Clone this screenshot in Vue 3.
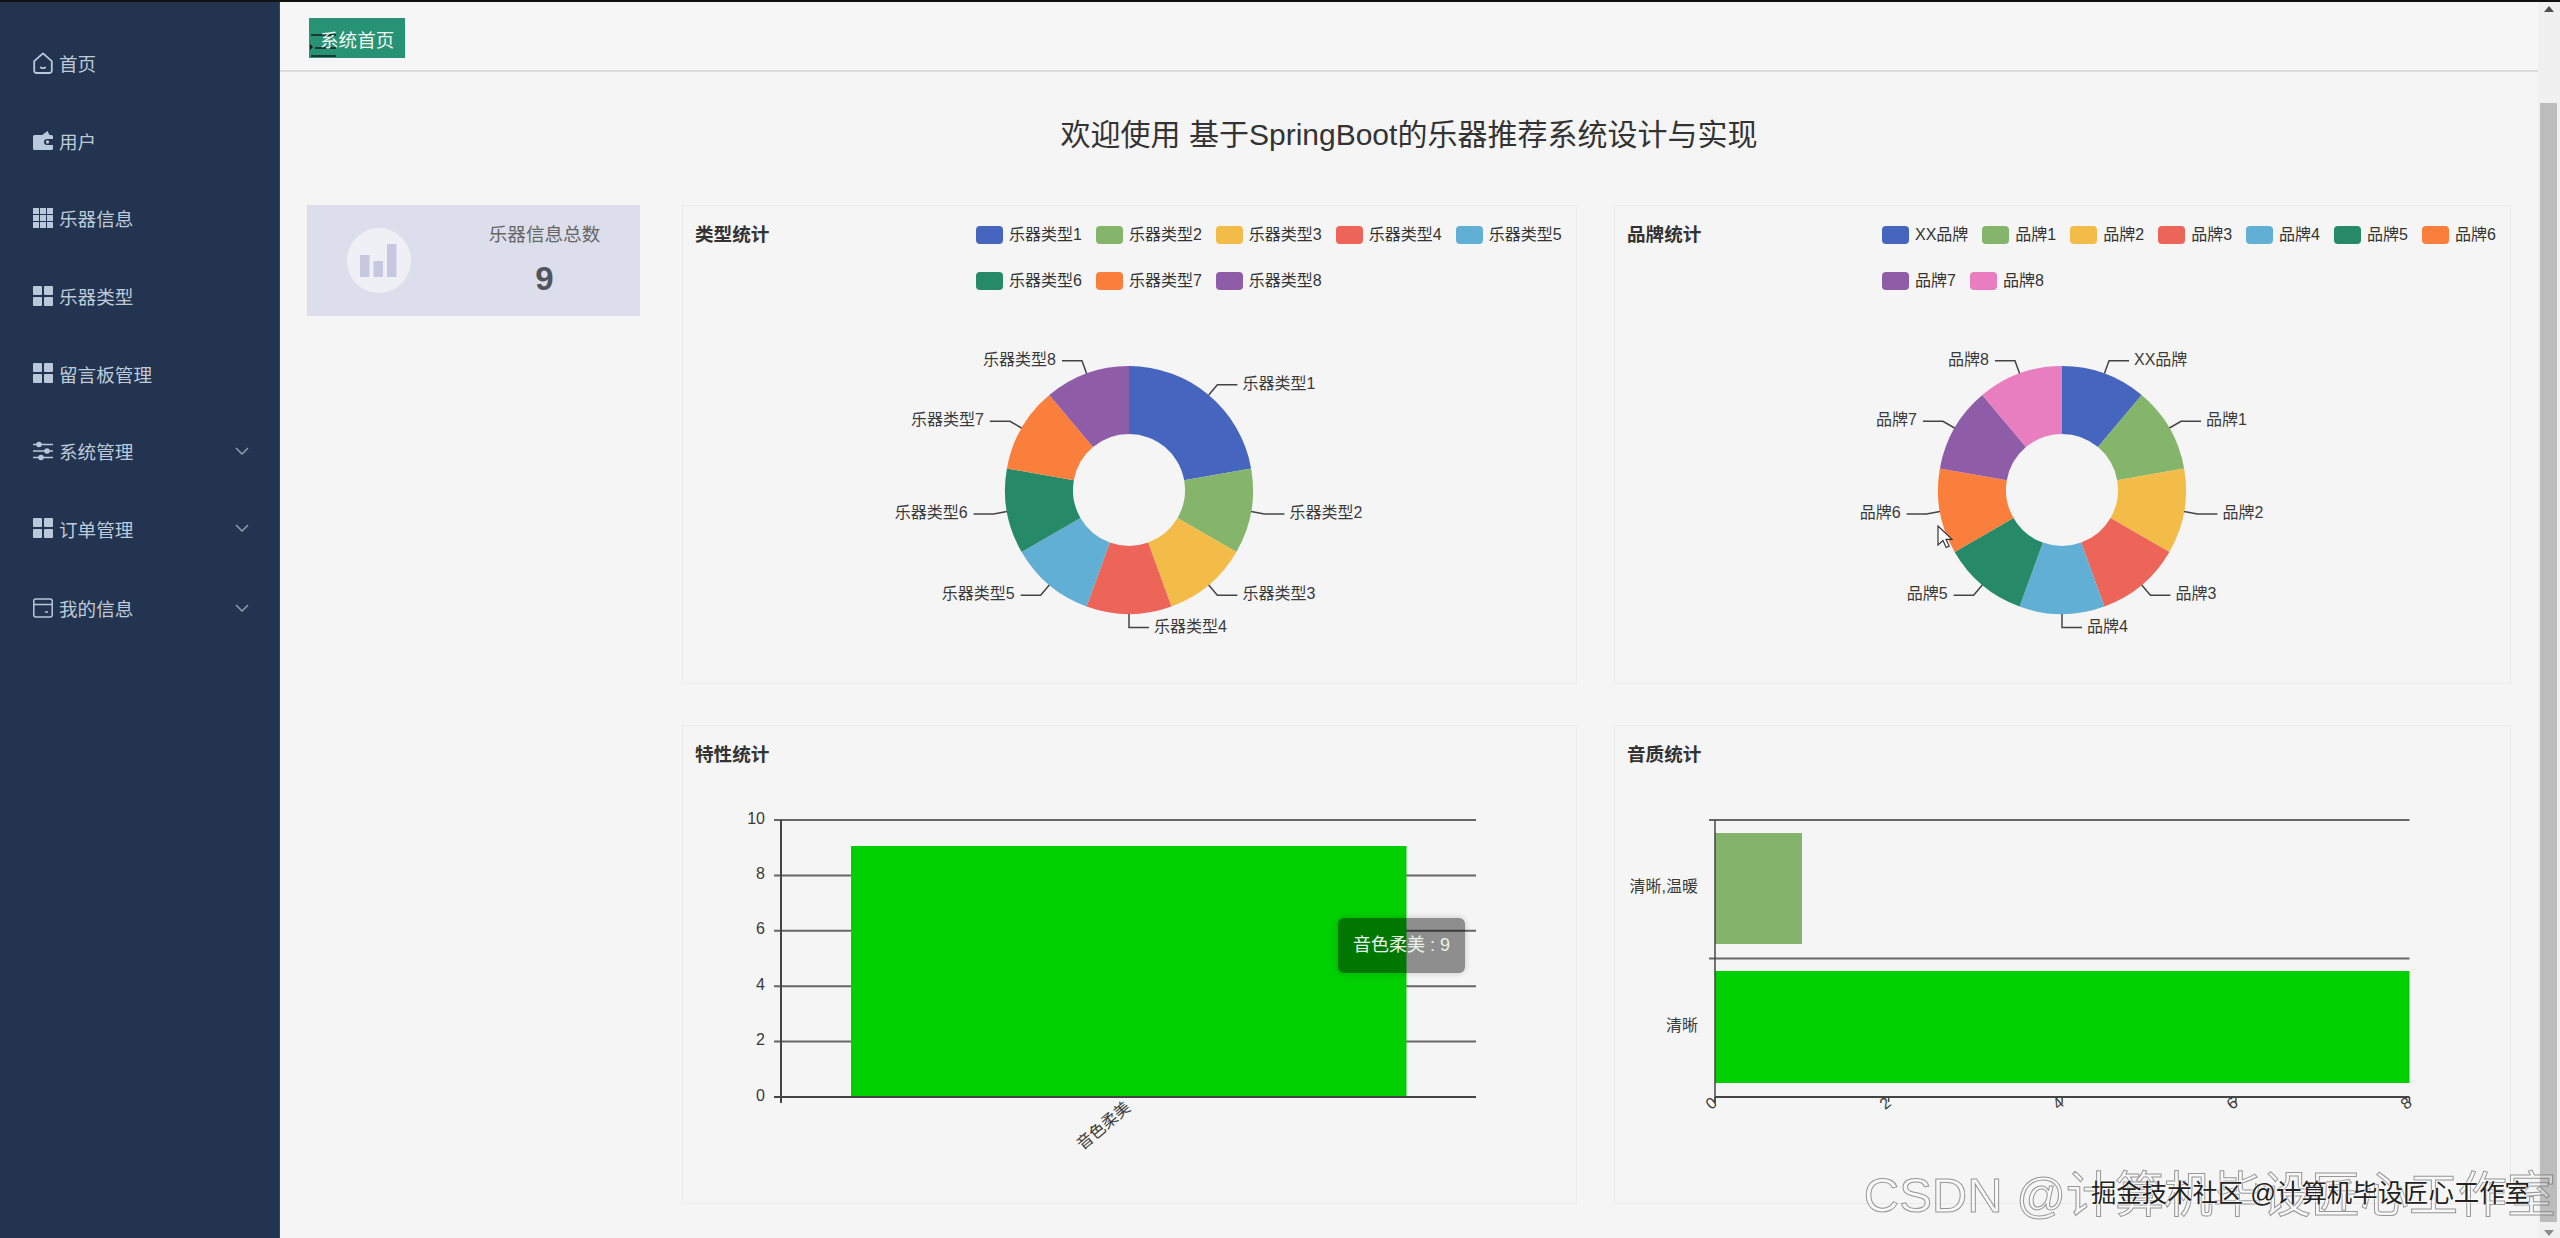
<script setup>
const menu = [
  { label: '首页', icon: 'home' },
  { label: '用户', icon: 'wallet' },
  { label: '乐器信息', icon: 'grid' },
  { label: '乐器类型', icon: 'squares' },
  { label: '留言板管理', icon: 'squares' },
  { label: '系统管理', icon: 'sliders', more: true },
  { label: '订单管理', icon: 'squares', more: true },
  { label: '我的信息', icon: 'card', more: true }
]

const colors = ['#4565be', '#84b56a', '#f3bb47', '#ec6558', '#61afd5', '#268a68', '#fb7f3c', '#8f5da8', '#e87dc0']

// donut maths, same shape echarts gives with radius [56, 124]
const CX = 446
const CY = 200
const R = 124
const R0 = 56

const polar = (r, deg) => {
  const a = (deg * Math.PI) / 180
  return [CX + r * Math.sin(a), CY - r * Math.cos(a)]
}

const buildPie = (names, values) => {
  const total = values.reduce((s, v) => s + v, 0)
  let start = 0
  return names.map((name, i) => {
    const sweep = (values[i] / total) * 360
    const end = start + sweep
    const mid = start + sweep / 2
    const [x1, y1] = polar(R, start)
    const [x2, y2] = polar(R, end)
    const [x3, y3] = polar(R0, end)
    const [x4, y4] = polar(R0, start)
    const large = sweep > 180 ? 1 : 0
    const [lx0, ly0] = polar(R, mid)
    const [lx1, ly1] = polar(R + 13.5, mid)
    const right = mid <= 180
    const lx2 = lx1 + (right ? 20 : -20)
    start = end
    return {
      name,
      color: colors[i],
      d: `M${x1} ${y1}A${R} ${R} 0 ${large} 1 ${x2} ${y2}L${x3} ${y3}A${R0} ${R0} 0 ${large} 0 ${x4} ${y4}Z`,
      line: `${lx0},${ly0} ${lx1},${ly1} ${lx2},${ly1}`,
      tx: lx2 + (right ? 5 : -6),
      ty: ly1 - 1.5,
      anchor: right ? 'start' : 'end'
    }
  })
}

const typeNames = Array.from({ length: 8 }, (_, i) => `乐器类型${i + 1}`)
const brandNames = ['XX品牌', ...Array.from({ length: 8 }, (_, i) => `品牌${i + 1}`)]

const pies = [
  { title: '类型统计', legendClass: 'legend-types', viewBox: '0 0 893 393', slices: buildPie(typeNames, [2, 1, 1, 1, 1, 1, 1, 1]) },
  { title: '品牌统计', legendClass: 'legend-brands', viewBox: '-1 0 895 393', slices: buildPie(brandNames, [1, 1, 1, 1, 1, 1, 1, 1, 1]) }
]

const yTicks = [
  { label: '10', y: 55 },
  { label: '8', y: 110.4 },
  { label: '6', y: 165.8 },
  { label: '4', y: 221.2 },
  { label: '2', y: 276.6 },
  { label: '0', y: 332 }
]

const xTicks = [
  { label: '0', tick: 99, x: 95 },
  { label: '2', tick: 272.6, x: 269 },
  { label: '4', tick: 446.2, x: 442 },
  { label: '6', tick: 619.9, x: 616 },
  { label: '8', tick: 793.5, x: 790 }
]
</script>

<template>
  <div class="page">
    <aside class="sidebar">
      <div v-for="item in menu" :key="item.label" class="menu-item">
        <svg v-if="item.icon === 'home'" class="menu-icon icon-tall" viewBox="0 0 20 22" fill="none" stroke="currentColor" stroke-width="1.8" stroke-linejoin="round">
          <path d="M1.2 9.2 10 1.4l8.8 7.8v9.4q0 2.4-2.4 2.4H3.6q-2.4 0-2.4-2.4z" />
          <path d="M7.8 15.4q2.2 1.5 4.4 0" stroke-linecap="round" />
        </svg>
        <svg v-else-if="item.icon === 'wallet'" class="menu-icon" viewBox="0 0 20 20" fill="currentColor">
          <path d="M0 6.5Q0 5 1.5 5h7.7L14.5 1l2 4h2Q20 5 20 6.5V9h-6a3 3 0 0 0 0 6h6v3.5q0 1.5-1.5 1.5h-17Q0 20 0 18.5z" />
          <circle cx="14.5" cy="12" r="1.7" />
        </svg>
        <svg v-else-if="item.icon === 'grid'" class="menu-icon" viewBox="0 0 20 20" fill="currentColor">
          <template v-for="row in 3" :key="row">
            <rect v-for="col in 3" :key="col" :x="(col - 1) * 7" :y="(row - 1) * 7" width="6" height="6" />
          </template>
        </svg>
        <svg v-else-if="item.icon === 'squares'" class="menu-icon" viewBox="0 0 20 20" fill="currentColor">
          <rect x="0" y="0" width="9" height="9" rx="1" />
          <rect x="11" y="0" width="9" height="9" rx="1" />
          <rect x="0" y="11" width="9" height="9" rx="1" />
          <rect x="11" y="11" width="9" height="9" rx="1" />
        </svg>
        <svg v-else-if="item.icon === 'sliders'" class="menu-icon" viewBox="0 0 20 20" fill="none" stroke="currentColor" stroke-width="1.6">
          <path d="M0 3.5h20M0 10h20M0 16.5h20" />
          <circle cx="6" cy="3.5" r="2" fill="currentColor" />
          <circle cx="14" cy="10" r="2" fill="currentColor" />
          <circle cx="8" cy="16.5" r="2" fill="currentColor" />
        </svg>
        <svg v-else class="menu-icon" viewBox="0 0 20 20" fill="none" stroke="currentColor" stroke-width="1.5">
          <rect x="0.8" y="1" width="18.4" height="18" rx="2" />
          <path d="M1 6.5h18M12 14h3" />
        </svg>
        <span class="menu-label">{{ item.label }}</span>
        <svg v-if="item.more" class="chevron" viewBox="0 0 14 8" fill="none" stroke="currentColor" stroke-width="1.5">
          <path d="M1 1l6 6 6-6" />
        </svg>
      </div>
    </aside>

    <div class="main">
      <header class="topbar">
        <div class="crumb">
          <svg class="hamburger" viewBox="0 0 26 24" fill="none" stroke="#1c1c1c" stroke-width="1.5">
            <path d="M1 1h25M5 14h21M1 22h25" />
            <path d="M0 10l3 3-3 3z" fill="#1c1c1c" stroke="none" />
          </svg>
          <span class="crumb-text">系统首页</span>
        </div>
      </header>

      <main class="content">
        <h1 class="welcome">欢迎使用 基于SpringBoot的乐器推荐系统设计与实现</h1>

        <div class="dash">
          <div class="stat-card">
            <div class="stat-circle">
              <svg viewBox="0 0 64 65" width="64" height="65" fill="#c6c8e0">
                <rect x="13" y="27" width="9.5" height="22" />
                <rect x="26.5" y="33" width="9.5" height="16" />
                <rect x="40" y="16" width="9.5" height="33" />
              </svg>
            </div>
            <div class="stat-text">
              <div class="stat-label">乐器信息总数</div>
              <div class="stat-value">9</div>
            </div>
          </div>

          <div class="charts">
            <section v-for="pie in pies" :key="pie.title" class="chart-card">
              <div class="chart-head">
                <span class="chart-title">{{ pie.title }}</span>
                <div class="legend" :class="pie.legendClass">
                  <div v-for="s in pie.slices" :key="s.name" class="legend-item">
                    <i class="swatch" :style="{ background: s.color }"></i>
                    <span>{{ s.name }}</span>
                  </div>
                </div>
              </div>
              <svg class="chart-svg" :viewBox="pie.viewBox">
                <path v-for="s in pie.slices" :key="s.name" :d="s.d" :fill="s.color" />
                <g v-for="s in pie.slices" :key="s.name + '-label'">
                  <polyline :points="s.line" fill="none" stroke="#444" stroke-width="1.5" />
                  <text :x="s.tx" :y="s.ty" dy=".35em" :text-anchor="s.anchor">{{ s.name }}</text>
                </g>
              </svg>
            </section>

            <section class="chart-card">
              <div class="chart-head">
                <span class="chart-title">特性统计</span>
              </div>
              <svg class="chart-svg" viewBox="0 -1 893 439">
                <g v-for="t in yTicks" :key="t.label">
                  <line x1="91" :y1="t.y" x2="793" :y2="t.y" class="grid-line" />
                  <text x="82" :y="t.y - 2" dy=".35em" text-anchor="end">{{ t.label }}</text>
                </g>
                <rect x="168" y="81" width="555.5" height="251" fill="#00cf00" />
                <line x1="91" y1="332" x2="793" y2="332" class="axis-line" />
                <line x1="98" y1="55" x2="98" y2="338" class="axis-line" />
                <text x="445" y="340" dy=".35em" text-anchor="end" transform="rotate(-40 445 340)">音色柔美</text>
              </svg>
              <div class="tooltip">音色柔美 : 9</div>
            </section>

            <section class="chart-card">
              <div class="chart-head">
                <span class="chart-title">音质统计</span>
              </div>
              <svg class="chart-svg" viewBox="-1 -1 895 439">
                <line x1="93" y1="55" x2="793.5" y2="55" class="grid-line" />
                <line x1="93" y1="193.5" x2="793.5" y2="193.5" class="grid-line" />
                <rect x="99" y="68" width="87" height="111" fill="#84b36c" />
                <rect x="99" y="206" width="694.5" height="112" fill="#00cf00" />
                <line x1="99" y1="332" x2="793.5" y2="332" class="axis-line" />
                <line x1="99" y1="55" x2="99" y2="338" class="axis-thin" />
                <text x="82" y="121" dy=".35em" text-anchor="end">清晰,温暖</text>
                <text x="82" y="260.5" dy=".35em" text-anchor="end">清晰</text>
                <g v-for="t in xTicks" :key="t.label">
                  <line :x1="t.tick" y1="332" :x2="t.tick" y2="337" class="axis-thin" />
                  <text :x="t.x" y="338" dy=".35em" text-anchor="middle" :transform="`rotate(-40 ${t.x} 338)`">{{ t.label }}</text>
                </g>
              </svg>
            </section>
          </div>
        </div>
      </main>
    </div>

    <div class="scrollbar">
      <div class="arrow-up"></div>
      <div class="thumb"></div>
      <div class="arrow-down"></div>
    </div>

    <svg class="cursor" viewBox="0 0 16 24" width="16" height="24">
      <path d="M1 1v19l5-4.5 3.2 7 3-1.4-3.2-6.8H15z" fill="#fff" stroke="#333" stroke-width="1.2" />
    </svg>
    <div class="mark-csdn">CSDN @计算机毕设匠心工作室</div>
    <div class="mark-juejin">掘金技术社区 @计算机毕设匠心工作室</div>
  </div>
</template>

<style>
html,
body {
  margin: 0;
  overflow: hidden;
  background: #f5f5f5;
}
</style>

<style scoped>
.page {
  position: relative;
  display: flex;
  height: 1238px;
  box-sizing: border-box;
  border-top: 2px solid #111;
  overflow: hidden;
  background: #f5f5f5;
  font-family: "Liberation Sans", "Noto Sans CJK SC", sans-serif;
  color: #333;
}

.sidebar {
  flex: 0 0 280px;
  box-sizing: border-box;
  padding-top: 22px;
  background: #223450;
  border-right: 1px solid #3b4654;
}
.menu-item {
  display: flex;
  align-items: center;
  height: 77.6px;
  padding: 0 30px 0 33px;
  color: #b9c8da;
}
.menu-item:last-child {
  margin-top: 2px;
}
.menu-icon {
  flex: none;
  width: 20px;
  height: 20px;
  margin-right: 6px;
}
.icon-tall {
  height: 22px;
}
.menu-label {
  font-size: 18.6px;
  color: #bfcbd9;
}
.chevron {
  width: 14px;
  height: 8px;
  margin-left: auto;
  color: #8d9db2;
}

.main {
  flex: 1;
  min-width: 0;
}
.topbar {
  box-sizing: border-box;
  height: 70px;
  padding: 16px 0 0 29px;
  background: #f6f6f6;
  border-bottom: 2px solid #dcdcdc;
}
.crumb {
  position: relative;
  display: flex;
  align-items: center;
  width: 96px;
  height: 40px;
  box-sizing: border-box;
  padding-left: 11px;
  background: #279274;
}
.crumb-text {
  position: relative;
  font-size: 18.6px;
  color: #f2f7f4;
  white-space: nowrap;
}
.hamburger {
  position: absolute;
  left: 1px;
  top: 16px;
  width: 26px;
  height: 24px;
}

.welcome {
  display: flex;
  align-items: center;
  justify-content: center;
  box-sizing: border-box;
  height: 133px;
  margin: 0;
  padding-bottom: 14px;
  font-size: 30px;
  font-weight: 400;
  color: #333;
}
.dash {
  display: grid;
  grid-template-columns: 333px 1fr;
  column-gap: 42px;
  align-items: start;
  padding: 0 27px;
}
.stat-card {
  display: flex;
  align-items: center;
  height: 111px;
  padding-left: 40px;
  background: #dcdeec;
}
.stat-circle {
  flex: none;
  width: 64px;
  height: 65px;
  border-radius: 50%;
  background: #eff0f6;
}
.stat-text {
  flex: 1;
  margin-left: 38px;
  text-align: center;
}
.stat-label {
  font-size: 18.6px;
  line-height: 24px;
  color: #666;
}
.stat-value {
  margin-top: 12px;
  font-size: 33px;
  line-height: 40px;
  font-weight: 700;
  color: #52545c;
}

.charts {
  display: grid;
  grid-template-columns: 895px 897px;
  grid-auto-rows: 479px;
  gap: 41px 37px;
}
.chart-card {
  position: relative;
  display: flex;
  flex-direction: column;
  box-sizing: border-box;
  border: 1px solid #ececec;
  background: #f5f5f5;
}
.chart-head {
  display: flex;
  justify-content: space-between;
  align-items: flex-start;
  padding: 20px 0 0 12px;
}
.chart-title {
  font-size: 18.6px;
  line-height: 18px;
  font-weight: 700;
  color: #333;
}
.legend {
  display: flex;
  flex-wrap: wrap;
  gap: 28px 14px;
}
.legend-types {
  width: 600px;
}
.legend-brands {
  width: 628px;
}
.legend-item {
  display: flex;
  align-items: center;
  height: 18px;
  font-size: 16px;
  color: #333;
  white-space: nowrap;
}
.legend-item span {
  margin-top: -4px;
}
.swatch {
  display: block;
  width: 27px;
  height: 18px;
  margin-right: 6px;
  border-radius: 4px;
}
.chart-svg {
  display: block;
  width: 100%;
  flex: 1;
  min-height: 0;
}
.chart-svg text {
  font-family: "Liberation Sans", "Noto Sans CJK SC", sans-serif;
  font-size: 16px;
  fill: #3a3a3a;
}
.grid-line {
  stroke: #666;
  stroke-width: 2;
}
.axis-line {
  stroke: #444;
  stroke-width: 2;
}
.axis-thin {
  stroke: #444;
  stroke-width: 1.5;
}
.tooltip {
  position: absolute;
  left: 655px;
  top: 192px;
  width: 127px;
  box-sizing: border-box;
  padding: 14px 0;
  border-radius: 6px;
  background: rgba(0, 0, 0, 0.42);
  box-shadow: 0 0 6px rgba(0, 0, 0, 0.2);
  font-size: 18px;
  line-height: 27px;
  text-align: center;
  color: #e9f3e9;
  white-space: nowrap;
}

.scrollbar {
  flex: 0 0 22px;
  display: flex;
  flex-direction: column;
  align-items: center;
  background: #f0f0f0;
}
.arrow-up {
  width: 0;
  height: 0;
  margin-top: 4px;
  border: 5px solid transparent;
  border-top: 0;
  border-bottom: 6px solid #505050;
}
.thumb {
  flex: none;
  width: 17px;
  height: 1119px;
  margin-top: 91px;
  margin-left: -2px;
  background: #bcbcbc;
}
.arrow-down {
  width: 0;
  height: 0;
  margin-top: 8px;
  border: 5px solid transparent;
  border-bottom: 0;
  border-top: 6px solid #8a8a8a;
}

.cursor {
  position: absolute;
  left: 1937px;
  top: 523px;
}
.mark-csdn {
  position: absolute;
  right: 4px;
  top: 1163px;
  font-size: 49px;
  line-height: 60px;
  white-space: nowrap;
  color: rgba(255, 255, 255, 0.35);
  -webkit-text-stroke: 1px rgba(110, 110, 110, 0.7);
}
.mark-juejin {
  position: absolute;
  right: 30px;
  top: 1175px;
  font-size: 25.4px;
  line-height: 32px;
  white-space: nowrap;
  color: #222;
  text-shadow: 0 0 3px #fff, 0 0 2px #fff;
}
</style>
